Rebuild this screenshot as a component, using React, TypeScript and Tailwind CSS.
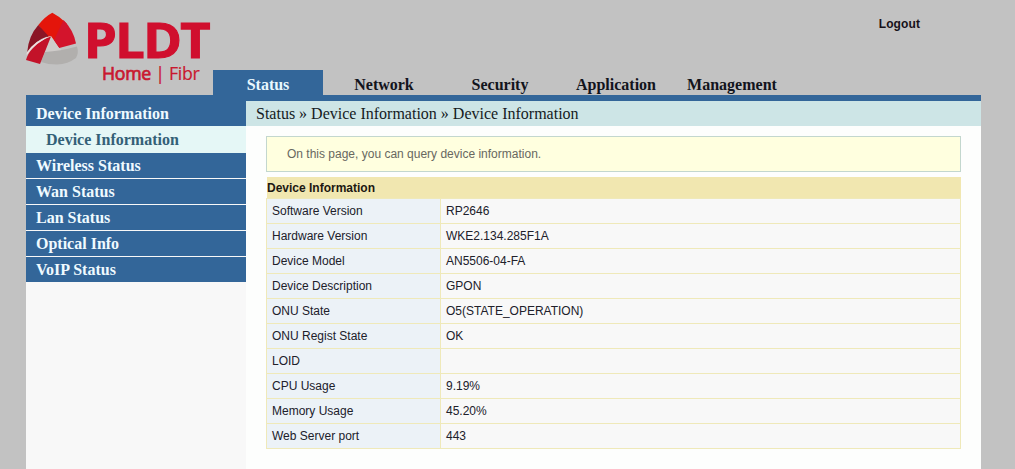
const tabs = ['Status', 'Network', 'Security', 'Application', 'Management'];

const menu = ['Wireless Status', 'Wan Status', 'Lan Status', 'Optical Info', 'VoIP Status'];

const rows = [
  { label: 'Software Version', value: 'RP2646' },
  { label: 'Hardware Version', value: 'WKE2.134.285F1A' },
  { label: 'Device Model', value: 'AN5506-04-FA' },
  { label: 'Device Description', value: 'GPON' },
  { label: 'ONU State', value: 'O5(STATE_OPERATION)' },
  { label: 'ONU Regist State', value: 'OK' },
  { label: 'LOID', value: '' },
  { label: 'CPU Usage', value: '9.19%' },
  { label: 'Memory Usage', value: '45.20%' },
  { label: 'Web Server port', value: '443' },
];

const Logo = () => (
  <svg width="187" height="90" viewBox="26 5 187 90" className="shrink-0">
    {/* Emblem */}
    <path d="M51 36 L59.5 48 L62 51 L43 56 Z" fill="#cfccca" />
    <path d="M45 52 Q60 51 77 46.5 Q79 53 76 58 Q68 64 57 64.5 Q48 64.5 41 62 Z" fill="#b1afad" />
    <path d="M38.3 25 Q45 16.5 52.3 12.7 Q60 16.5 66.7 23.5 L59.5 48 L51 36 L47 37 Z" fill="#e4150b" />
    <path d="M63.5 20 Q73.5 30 76 43.5 L59.3 48 L54 40 Z" fill="#d3142c" />
    <path d="M38.3 25 L48.5 36 Q35 40.5 27.2 52 Q28.5 36 38.3 25 Z" fill="#8b1525" />
    <path d="M51 36.5 L40 64 L26 60 Q28 53 33 48 Q41 39.5 51 36.5 Z" fill="#c31229" />
    <path d="M26.7 53 Q35 39.5 51 36 Q36 42 26.7 55 Z" fill="#f1dedd" />
    {/* Word mark */}
    <text
      x="84"
      y="57.5"
      textLength="125"
      lengthAdjust="spacingAndGlyphs"
      stroke="#d00f2e"
      strokeWidth="1.1"
      className="fill-[#d00f2e] font-['Open_Sans',sans-serif] text-[49px] font-bold tracking-[-1.5px]"
    >
      PLDT
    </text>
    <text
      x="102"
      y="79.5"
      textLength="97.5"
      lengthAdjust="spacingAndGlyphs"
      stroke="#c9182f"
      strokeWidth="0.2"
      className="fill-[#c9182f] font-['Open_Sans',sans-serif] text-[17.5px] font-normal tracking-[-0.3px]"
    >
      <tspan strokeWidth="0.7">Home</tspan> | Fibr
    </text>
  </svg>
);

const Header = () => (
  <header className="flex h-[95px] pt-[5px]">
    <Logo />
    <div className="flex flex-1 flex-col justify-between">
      <a className="mt-[11px] mr-[61px] self-end font-['Liberation_Sans',sans-serif] text-xs leading-4 font-bold tracking-[0.1px] text-[#171119]">
        Logout
      </a>
      <nav className="flex gap-1.5">
        {tabs.map((tab, i) => (
          <a
            key={tab}
            className={`flex h-[25px] w-[110px] items-center justify-center pt-[5px] ${
              i === 0 ? 'bg-[#336699] text-[#e9f8ff]' : 'text-[#12141c]'
            }`}
          >
            {tab}
          </a>
        ))}
      </nav>
    </div>
  </header>
);

const Sidebar = () => (
  <aside className="w-[220px] shrink-0 bg-[#f8f8f8] leading-[25px] text-[#effaff]">
    <div className="h-[25px] bg-[#336699] pl-2.5">Device Information</div>
    <div className="h-[27px] bg-[#e5f7f6] pt-px pl-5 text-[#336077]">Device Information</div>
    <ul className="flex flex-col gap-px">
      {menu.map((item) => (
        <li key={item} className="h-[25px] bg-[#336699] pl-2.5">
          {item}
        </li>
      ))}
    </ul>
  </aside>
);

const DeviceTable = () => (
  <table className="mt-[5px] w-full table-fixed border-collapse text-xs">
    <colgroup>
      <col className="w-[174px]" />
      <col />
    </colgroup>
    <thead>
      <tr className="h-[21px] bg-[#f1e7b0]">
        <th colSpan={2} className="p-0 pt-px pl-[0.5px] text-left leading-4 font-bold text-[#1c1712]">
          Device Information
        </th>
      </tr>
    </thead>
    <tbody>
      {rows.map((row) => (
        <tr key={row.label} className="h-[25px]">
          <td className="border border-[#efe9b9] bg-[#ecf2f7] p-0 pl-[5px] leading-4">{row.label}</td>
          <td className="border border-[#efe9b9] bg-[#f8f8f8] p-0 pl-[5px] leading-4">{row.value}</td>
        </tr>
      ))}
    </tbody>
  </table>
);

export default function App() {
  return (
    <div className="h-[469px] overflow-hidden bg-[#c2c2c2] pr-[34px] pl-[26px] font-['Liberation_Serif',serif] text-base font-bold">
      <Header />
      <div className="h-1.5 bg-[#336699]" />
      <div className="flex h-[368px] bg-[#fdfefd]">
        <Sidebar />
        <main className="flex-1">
          <div className="h-[25px] bg-[#cde5e6] pl-2.5 leading-[26px] font-normal text-[#151b1e]">
            Status » Device Information » Device Information
          </div>
          <div className="px-5 pt-2.5 font-['Liberation_Sans',sans-serif] font-normal text-[#20202a]">
            <div className="h-9 border border-[#c3d7ce] bg-[#ffffdf] pl-5 text-xs leading-[34px] text-[#686860]">
              On this page, you can query device information.
            </div>
            <DeviceTable />
          </div>
        </main>
      </div>
    </div>
  );
}
